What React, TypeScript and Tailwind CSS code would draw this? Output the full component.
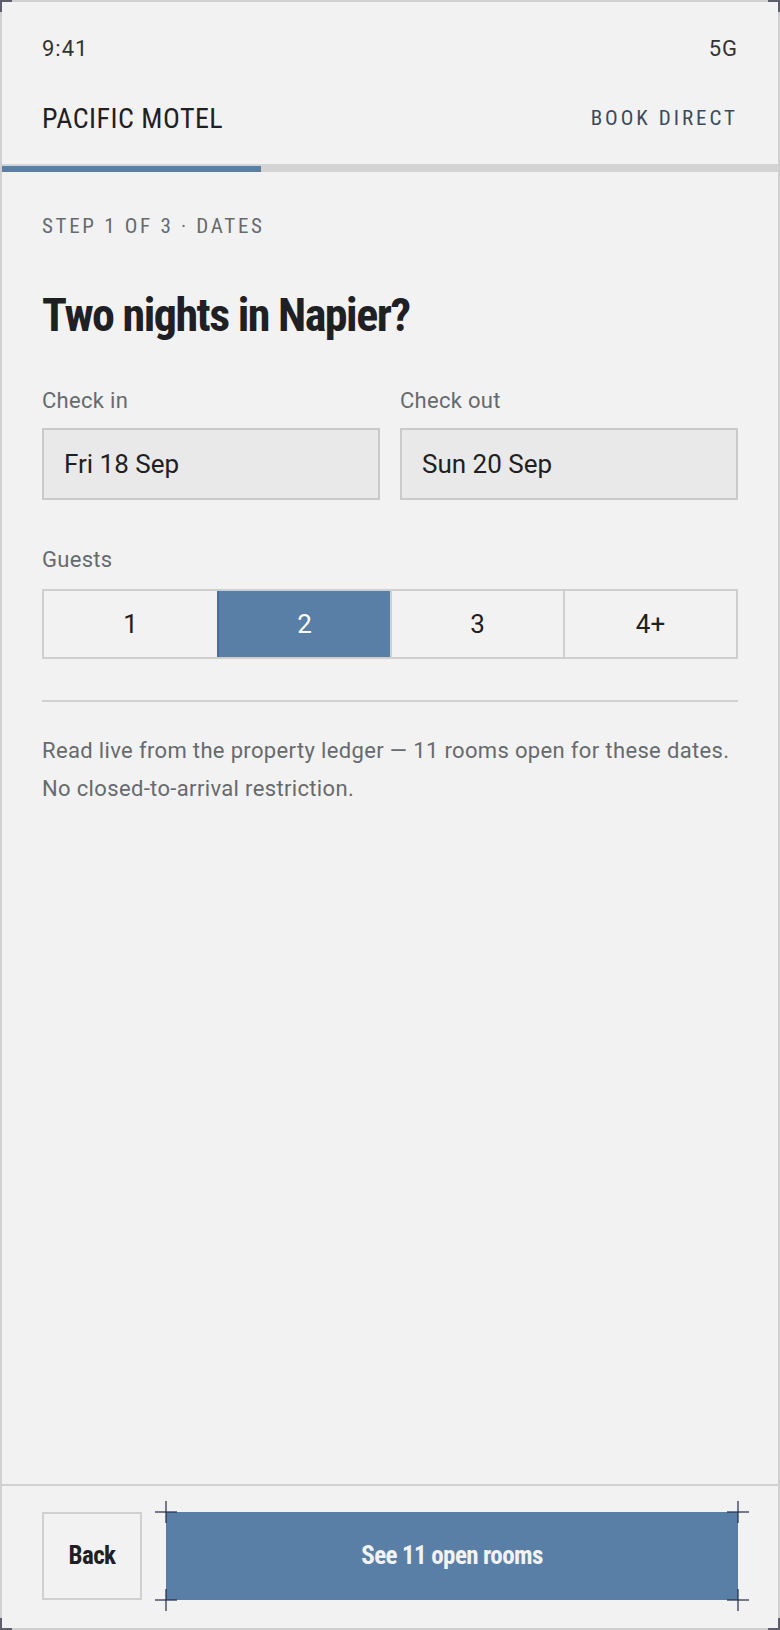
import { useState } from 'react';

const body = "font-['Roboto','Liberation_Sans',sans-serif]";
const narrow = "font-['Roboto','Liberation_Sans',sans-serif] [font-stretch:75%]";

// L-shaped marks on the four corners of the device frame
function FrameMarks() {
  const c = '#5d5f6c';
  return (
    <svg className="pointer-events-none absolute left-[-2px] top-[-2px]" width={780} height={1630}>
      <rect x={0} y={0} width={12} height={2} fill={c} />
      <rect x={0} y={0} width={2} height={12} fill={c} />
      <rect x={768} y={0} width={12} height={2} fill={c} />
      <rect x={778} y={0} width={2} height={12} fill={c} />
      <rect x={0} y={1628} width={12} height={2} fill={c} />
      <rect x={0} y={1618} width={2} height={12} fill={c} />
      <rect x={768} y={1628} width={12} height={2} fill={c} />
      <rect x={778} y={1618} width={2} height={12} fill={c} />
    </svg>
  );
}

// crop-mark crosshairs centred on each corner of the primary button
function Crosshairs() {
  const corners = [
    [11, 11],
    [583, 11],
    [11, 99],
    [583, 99],
  ];
  return (
    <svg
      className="pointer-events-none absolute inset-[-11px] h-[calc(100%+22px)] w-[calc(100%+22px)]"
      viewBox="0 0 594 110"
      preserveAspectRatio="none"
    >
      {corners.map(([x, y]) => (
        <g key={`${x}-${y}`} fill="#1f2a44" fillOpacity={0.6}>
          <rect x={x - 11} y={y - 1} width={22} height={2} />
          <rect x={x - 1} y={y - 11} width={2} height={22} />
        </g>
      ))}
    </svg>
  );
}

const guests = ['1', '2', '3', '4+'];

export default function App() {
  const [guest, setGuest] = useState(1);

  return (
    <div
      className={`relative flex h-[1630px] w-[780px] flex-col border-2 border-[#d0d0d0] bg-[#f2f2f2] text-[#1f2023] ${body}`}
    >
      <FrameMarks />

      <header className="border-b-2 border-[#d4d4d4] px-[40px] pb-[20px]">
        <div className="flex h-[92px] items-center justify-between text-[22px] tracking-[1px] text-[#333]">
          <span>9:41</span>
          <span>5G</span>
        </div>
        <div className="flex h-[50px] items-center justify-between">
          <span className={`${narrow} text-[28px] tracking-[0.5px] text-[#1f2023]`}>PACIFIC MOTEL</span>
          <span className="text-[21px] tracking-[3px] text-[#3b4a5e] [font-stretch:80%]">BOOK DIRECT</span>
        </div>
      </header>
      <div className="h-[6px] bg-[#d4d4d4]">
        <div className="h-full w-1/3 bg-[#5a7fa6]" />
      </div>

      <main className="px-[40px]">
        <p className="mt-[42px] h-[24px] text-[21px] leading-[24px] tracking-[2.7px] text-[#666a6e] [font-stretch:85%]">
          STEP 1 OF 3 · DATES
        </p>
        <h1 className={`${narrow} mt-[49px] text-[46px] font-bold leading-[56px] tracking-[-1.5px] text-[#1f2023]`}>
          Two nights in Napier?
        </h1>

        <div className="mt-[44px] grid grid-cols-2 gap-[20px]">
          {[
            ['Check in', 'Fri 18 Sep'],
            ['Check out', 'Sun 20 Sep'],
          ].map(([label, value]) => (
            <div key={label}>
              <div className="text-[22px] leading-[28px] tracking-[0.3px] text-[#666a6e]">{label}</div>
              <div className="mt-[13px] flex h-[72px] items-center border-2 border-[#cacaca] bg-[#e9e9e9] px-[20px] text-[26px] text-[#1f2023]">
                {value}
              </div>
            </div>
          ))}
        </div>

        <div className="mt-[46px] text-[22px] leading-[28px] tracking-[0.3px] text-[#666a6e]">Guests</div>
        <div className="mt-[15px] grid grid-cols-4 border-2 border-[#cfcfcf]">
          {guests.map((g, i) => (
            <button
              key={g}
              onClick={() => setGuest(i)}
              className={`flex h-[66px] items-center justify-center text-[26px] ${
                i > 0 ? 'border-l-2' : ''
              } ${
                guest === i
                  ? 'border-[#4f6b94] bg-[#5a7fa6] text-white'
                  : 'border-[#cfcfcf] text-[#1f2023]'
              }`}
            >
              {g}
            </button>
          ))}
        </div>

        <div className="mt-[41px] h-[2px] bg-[#d0d0d0]" />
        <p className="mt-[30px] text-[22px] leading-[38px] tracking-[0.35px] text-[#666a6e]">
          Read live from the property ledger — 11 rooms open for these dates.
          <br />
          No closed-to-arrival restriction.
        </p>
      </main>

      <footer className="mt-auto border-t-2 border-[#d0d0d0] px-[40px] pb-[28px] pt-[26px]">
        <div className="flex h-[88px] gap-[24px]">
          <button
            className={`${narrow} w-[100px] border-2 border-[#d0d0d0] text-[25px] font-bold tracking-[-0.6px] text-[#1f2023]`}
          >
            Back
          </button>
          <div className="relative flex-1">
            <button
              className={`${narrow} h-full w-full bg-[#5a7fa6] text-[25px] font-bold tracking-[-0.6px] text-[#f2f2f2]`}
            >
              See 11 open rooms
            </button>
            <Crosshairs />
          </div>
        </div>
      </footer>
    </div>
  );
}
